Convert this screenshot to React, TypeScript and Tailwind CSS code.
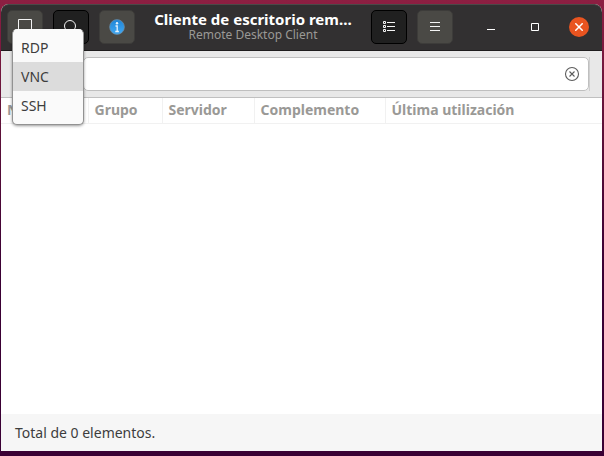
import type { ReactNode } from "react";

const protocols = ["RDP", "VNC", "SSH"];

const columns = [
  { name: "Nombre", width: "w-[87px]" },
  { name: "Grupo", width: "w-[74px]" },
  { name: "Servidor", width: "w-[92px]" },
  { name: "Complemento", width: "w-[131px]" },
  { name: "Última utilización", width: "" },
];

function ToolButton({ label, pressed = false, children }: { label: string; pressed?: boolean; children: ReactNode }) {
  return (
    <button
      type="button"
      aria-label={label}
      aria-pressed={pressed}
      className={
        "flex h-[34px] w-9 shrink-0 items-center justify-center rounded-[5px] border " +
        (pressed ? "border-black bg-[#202020]" : "border-[#3d3c3a] bg-[#4a4945]")
      }
    >
      {children}
    </button>
  );
}

function ProtocolMenu() {
  return (
    <ul
      role="menu"
      className="absolute top-[19px] left-[5px] z-10 w-[72px] overflow-hidden rounded-[5px] border border-[#929292] border-t-[#fafafa] bg-[#fafafa] pt-[3px] pb-1 shadow-[0_1px_3px_rgba(0,0,0,0.4)]"
    >
      {protocols.map((name) => (
        <li key={name} role="none">
          <button
            type="button"
            role="menuitem"
            className={
              "block h-[29px] w-full px-2 text-left text-sm text-[#3d3d3d] " + (name === "VNC" ? "bg-[#dcdcdc]" : "")
            }
          >
            {name}
          </button>
        </li>
      ))}
    </ul>
  );
}

function HeaderBar() {
  return (
    <header className="flex h-[47px] items-center rounded-t-lg border-b border-b-[#1e1c1d] bg-[#323031] pr-[11px] pl-[6px] shadow-[inset_0_1px_0_#4b4948]">
      <div className="flex gap-[10px]">
        <div className="relative">
          <ToolButton label="Nueva conexión">
            <svg width="16" height="16" viewBox="0 0 16 16" fill="none" stroke="#f4f4f4">
              <path d="M1.5 0.5h13v10h-13zM4 14.5h8" />
            </svg>
          </ToolButton>
          <ProtocolMenu />
        </div>
        <ToolButton label="Buscar" pressed>
          <svg width="16" height="16" viewBox="0 0 16 16" fill="none" stroke="#f4f4f4">
            <circle cx="7" cy="7" r="5.5" />
            <path d="M11 11l4 4" />
          </svg>
        </ToolButton>
        <ToolButton label="Información">
          <svg width="16" height="16" viewBox="0 0 16 16">
            <defs>
              <linearGradient id="info-fill" x1="0" y1="0" x2="0" y2="1">
                <stop offset="0" stopColor="#1f86d8" />
                <stop offset="1" stopColor="#41a8f2" />
              </linearGradient>
            </defs>
            <circle cx="8" cy="8" r="7.4" fill="url(#info-fill)" stroke="#6f8ba0" strokeWidth="0.7" />
            <circle cx="8" cy="4.2" r="1.2" fill="#e4f2fd" />
            <path d="M6.5 7h1.7v5.5M6.3 12.5h3.6" fill="none" stroke="#e4f2fd" strokeWidth="1.3" />
          </svg>
        </ToolButton>
      </div>
      <div className="flex min-w-0 flex-1 flex-col items-center whitespace-nowrap">
        <h1 className="text-[15px] leading-4 font-bold text-white">Cliente de escritorio rem…</h1>
        <p className="text-xs leading-4 text-[#9a9996]">Remote Desktop Client</p>
      </div>
      <div className="flex gap-[10px]">
        <ToolButton label="Vista de lista" pressed>
          <svg width="14" height="14" viewBox="0 0 14 14" fill="none" stroke="#f4f4f4">
            <path d="M1.5 1.5h2v2h-2zM1.5 5.5h2v2h-2zM1.5 9.5h2v2h-2zM5 2.5h8M5 6.5h8M5 10.5h8" />
          </svg>
        </ToolButton>
        <ToolButton label="Menú">
          <svg width="10" height="10" viewBox="0 0 10 10" stroke="#f4f4f4">
            <path d="M0 0.5h10M0 4.5h10M0 8.5h10" />
          </svg>
        </ToolButton>
      </div>
      <div className="ml-[26px] flex gap-5">
        <button type="button" aria-label="Minimizar" className="flex size-6 items-center justify-center">
          <svg width="8" height="8" viewBox="0 0 8 8" stroke="#fff">
            <path d="M0 6.5h8" />
          </svg>
        </button>
        <button type="button" aria-label="Maximizar" className="flex size-6 items-center justify-center">
          <svg width="8" height="8" viewBox="0 0 8 8" fill="none" stroke="#fff">
            <path d="M0.5 0.5h7v7h-7z" />
          </svg>
        </button>
        <button type="button" aria-label="Cerrar" className="flex size-6 items-center justify-center">
          <span className="flex size-5 items-center justify-center rounded-full bg-[#e95420]">
            <svg width="8" height="8" viewBox="0 0 8 8" stroke="#fff" strokeWidth="1.5">
              <path d="M0.3 0.3l7.4 7.4M7.7 0.3l-7.4 7.4" />
            </svg>
          </span>
        </button>
      </div>
    </header>
  );
}

function SearchBar() {
  return (
    <div className="flex border-b border-[#c0c0c0] bg-[#e8e8e8] py-[6px] pr-3 pl-[82px]">
      <div className="flex-1 border-r border-[#cfcfcf]">
        <div className="flex h-[34px] items-center rounded-[5px] border border-[#bfbfbf] bg-white px-2">
          <input type="text" aria-label="Buscar conexión" className="min-w-0 flex-1 bg-transparent text-sm outline-none" />
          <button type="button" aria-label="Borrar">
            <svg width="16" height="16" viewBox="0 0 16 16" fill="none" stroke="#5c5c5c" strokeWidth="1.1">
              <circle cx="8" cy="8" r="6.5" />
              <path d="M5.5 5.5l5 5M10.5 5.5l-5 5" />
            </svg>
          </button>
        </div>
      </div>
    </div>
  );
}

export default function App() {
  return (
    <div className="flex min-h-screen flex-col bg-linear-to-b from-[#8d1f42] via-[#5b1038] via-30% to-[#3a0034] to-60% pt-1 pr-[2px] pb-[5px] pl-px font-['Noto_Sans','Open_Sans',sans-serif]">
      <div className="flex flex-1 flex-col overflow-hidden rounded-t-lg bg-white">
        <HeaderBar />
        <SearchBar />
        <main className="flex-1">
          <table className="w-full table-fixed border-collapse">
            <thead>
              <tr className="h-[25px] border-b border-[#f1f1f1]">
                {columns.map((column) => (
                  <th
                    key={column.name}
                    scope="col"
                    className={
                      "overflow-hidden border-r border-[#f1f1f1] pl-[6px] text-left text-sm leading-6 font-bold whitespace-nowrap text-[#9a9996] last:border-r-0 " +
                      column.width
                    }
                  >
                    {column.name}
                  </th>
                ))}
              </tr>
            </thead>
            <tbody />
          </table>
        </main>
        <footer className="flex h-[37px] items-center bg-[#f6f6f6] px-[14px] text-sm text-[#3d3d3d]">
          Total de 0 elementos.
        </footer>
      </div>
    </div>
  );
}
